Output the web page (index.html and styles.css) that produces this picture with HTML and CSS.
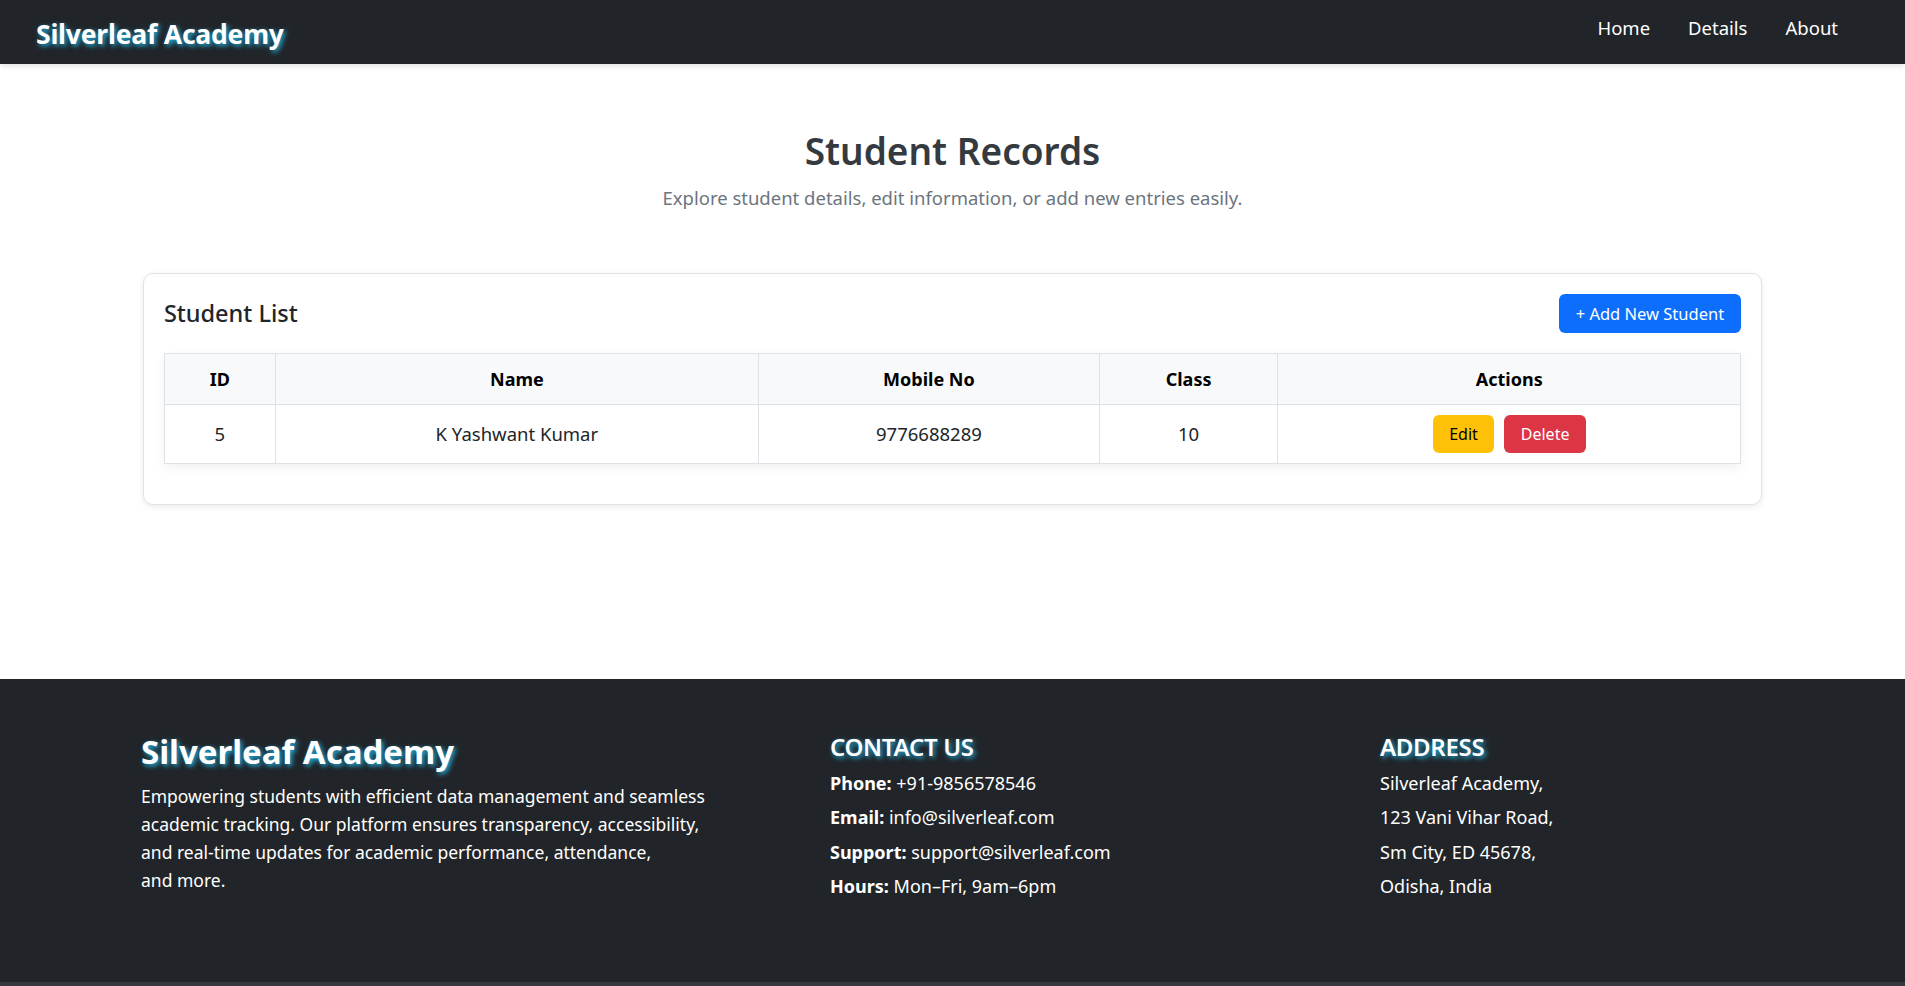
FILE: index.html
```html
<!DOCTYPE html>
<html lang="en">
<head>
<meta charset="utf-8">
<title>Silverleaf Academy - Student Records</title>
<link rel="stylesheet" href="styles.css">
</head>
<body>
<nav class="navbar">
  <a class="brand" href="#">Silverleaf Academy</a>
  <ul class="nav-links">
    <li><a href="#">Home</a></li>
    <li><a href="#">Details</a></li>
    <li><a href="#">About</a></li>
  </ul>
</nav>

<main class="main">
  <header class="intro">
    <h1 class="intro-title">Student Records</h1>
    <p class="intro-sub">Explore student details, edit information, or add new entries easily.</p>
  </header>

  <section class="card">
    <div class="card-head">
      <h4 class="card-title">Student List</h4>
      <button class="btn btn-primary">+ Add New Student</button>
    </div>
    <table class="table">
      <thead>
        <tr>
          <th class="col-id">ID</th>
          <th class="col-name">Name</th>
          <th class="col-mobile">Mobile No</th>
          <th class="col-class">Class</th>
          <th class="col-actions">Actions</th>
        </tr>
      </thead>
      <tbody>
        <tr>
          <td>5</td>
          <td>K Yashwant Kumar</td>
          <td>9776688289</td>
          <td>10</td>
          <td>
            <div class="actions">
              <button class="btn btn-warning">Edit</button>
              <button class="btn btn-danger">Delete</button>
            </div>
          </td>
        </tr>
      </tbody>
    </table>
  </section>
</main>

<footer class="footer">
  <div class="footer-inner">
    <div class="footer-col">
      <h3 class="footer-brand">Silverleaf Academy</h3>
      <p class="footer-text">Empowering students with efficient data management and seamless academic tracking. Our platform ensures transparency, accessibility, and real-time updates for academic performance, attendance,<br>and more.</p>
    </div>
    <div class="footer-col">
      <h4 class="footer-heading">CONTACT US</h4>
      <p class="footer-line"><strong>Phone:</strong> +91-9856578546</p>
      <p class="footer-line"><strong>Email:</strong> info@silverleaf.com</p>
      <p class="footer-line"><strong>Support:</strong> support@silverleaf.com</p>
      <p class="footer-line"><strong>Hours:</strong> Mon–Fri, 9am–6pm</p>
    </div>
    <div class="footer-col">
      <h4 class="footer-heading">ADDRESS</h4>
      <p class="footer-line">Silverleaf Academy,</p>
      <p class="footer-line">123 Vani Vihar Road,</p>
      <p class="footer-line">Sm City, ED 45678,</p>
      <p class="footer-line">Odisha, India</p>
    </div>
  </div>
</footer>
</body>
</html>
```

FILE: styles.css
```css
* { box-sizing: border-box; }

html, body {
  margin: 0;
  padding: 0;
}

body {
  font-family: "Noto Sans", "Open Sans", sans-serif;
  color: #212529;
  background: #fff;
  font-size: 16px;
  line-height: 1.5;
}

/* Navbar */
.navbar {
  height: 64px;
  background: #212529;
  display: flex;
  align-items: center;
  justify-content: space-between;
  padding: 0 48px 0 36px;
  box-shadow: 0 2px 6px rgba(0, 0, 0, 0.12);
  position: relative;
  z-index: 1;
}

.brand {
  color: #fff;
  text-decoration: none;
  font-weight: 700;
  font-size: 26.5px;
  line-height: 1.2;
  margin-top: 6px;
  letter-spacing: -0.2px;
  text-shadow: 2px 2px 5px #1fb6e8;
}

.nav-links {
  list-style: none;
  display: flex;
  margin: 0;
  padding: 0;
}

.nav-links a {
  display: block;
  color: #fff;
  text-decoration: none;
  font-size: 18.5px;
  padding: 0 19px;
  margin-top: -8px;
}

/* Intro */
.main {
  padding: 63px 0 174px;
}

.intro {
  text-align: center;
}

.intro-title {
  margin: 0 0 8px;
  font-size: 37px;
  font-weight: 600;
  line-height: 1.3;
  color: #343a40;
}

.intro-sub {
  margin: 0;
  font-size: 18.5px;
  line-height: 1.6;
  color: #6c757d;
}

/* Card */
.card {
  width: 85%;
  margin: 60px auto 0;
  border: 1px solid #dee2e6;
  border-radius: 10px;
  padding: 20px;
  background: #fff;
  box-shadow: 0 2px 6px rgba(0, 0, 0, 0.08);
}

.card-head {
  display: flex;
  align-items: center;
  justify-content: space-between;
  margin-bottom: 20px;
}

.card-title {
  margin: 0;
  font-size: 23.5px;
  font-weight: 500;
  line-height: 1.2;
  color: #212529;
}

.btn {
  font-family: inherit;
  font-size: 16.5px;
  line-height: 25px;
  border: 1px solid transparent;
  border-radius: 6px;
  padding: 6px 16px;
  cursor: pointer;
}

.btn-primary {
  background: #0d6efd;
  color: #fff;
}

.btn-warning {
  background: #ffc107;
  color: #000;
}

.btn-danger {
  background: #dc3545;
  color: #fff;
}

/* Table */
.table {
  width: 100%;
  border-collapse: collapse;
  margin-bottom: 20px;
  box-shadow: 0 4px 10px rgba(0, 0, 0, 0.06);
}

.table th,
.table td {
  border: 1px solid #dee2e6;
  text-align: center;
  vertical-align: middle;
}

.table th {
  background: #f8f9fa;
  font-weight: 700;
  font-size: 18px;
  color: #000;
  padding: 12px 8px;
  line-height: 26px;
}

.table td {
  padding: 10px 8px;
  font-size: 18.5px;
  line-height: 26px;
  color: #212529;
}

.col-id { width: 7.03%; }
.col-name { width: 30.67%; }
.col-mobile { width: 21.61%; }
.col-class { width: 11.34%; }
.col-actions { width: 29.35%; }

.actions {
  display: flex;
  justify-content: center;
  gap: 10px;
}

.actions .btn {
  font-size: 16px;
  line-height: 24px;
  padding: 6px 15.5px;
}

/* Footer */
.footer {
  background: #212529;
  color: #fff;
  padding: 52px 0 74px;
  border-bottom: 4px solid #35383c;
}

.footer-inner {
  width: 1623px;
  margin: 0 auto;
  display: grid;
  grid-template-columns: 689px 550px 1fr;
}

.footer-brand {
  margin: 0 0 8px;
  font-size: 33px;
  font-weight: 700;
  line-height: 1.3;
  text-shadow: 2px 2px 5px #1fb6e8;
}

.footer-text {
  margin: 0;
  max-width: 572px;
  font-size: 17.5px;
  line-height: 28px;
}

.footer-heading {
  margin: 0 0 8px;
  font-size: 24px;
  font-weight: 600;
  line-height: 1.3;
  letter-spacing: -0.3px;
  text-shadow: 2px 2px 5px #1fb6e8;
}

.footer-line {
  margin: 0 0 8px;
  font-size: 18px;
  line-height: 26.5px;
}

.footer-line strong {
  font-weight: 700;
}
```
